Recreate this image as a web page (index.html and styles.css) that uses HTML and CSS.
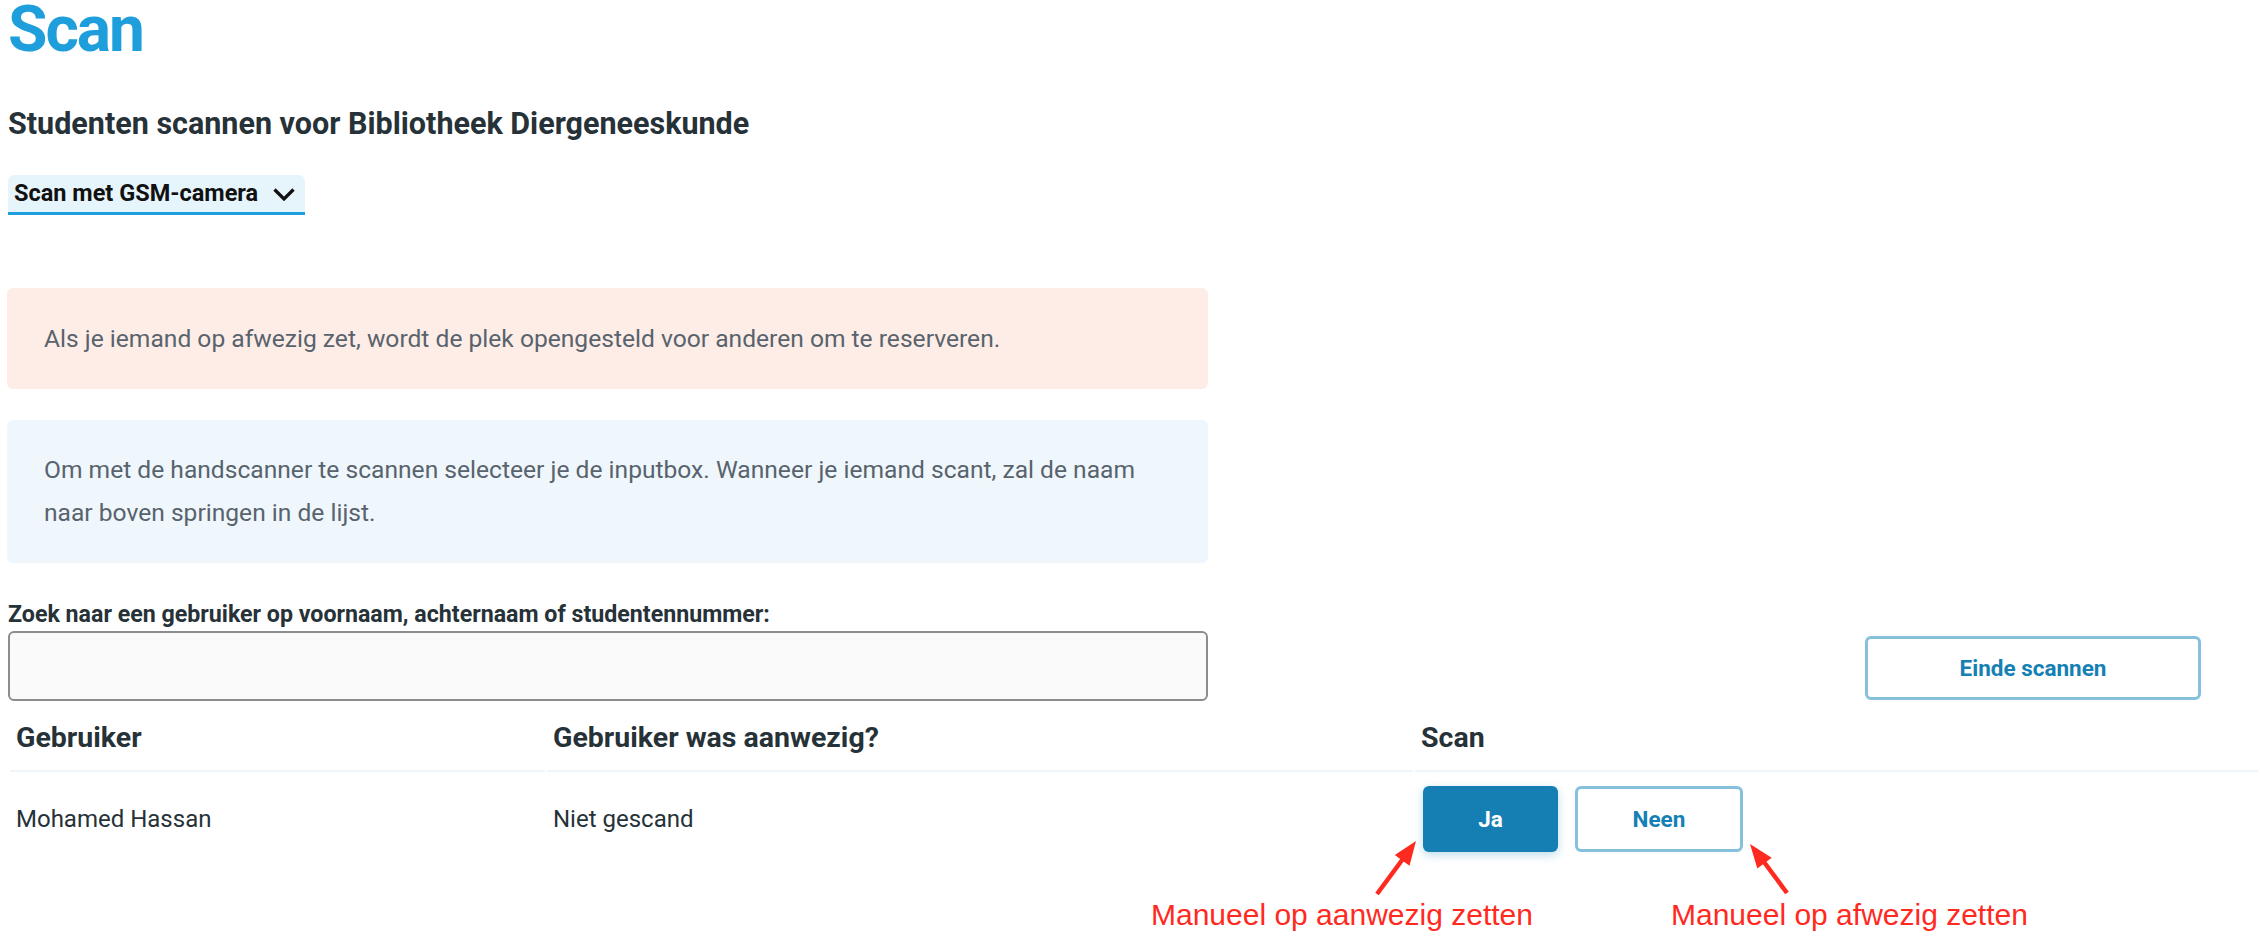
FILE: index.html
```html
<!DOCTYPE html>
<html lang="nl">
<head>
<meta charset="utf-8">
<title>Scan</title>
<link rel="stylesheet" href="styles.css">
</head>
<body>
<div class="page">
  <h1 class="title">Scan</h1>
  <h2 class="subtitle">Studenten scannen voor Bibliotheek Diergeneeskunde</h2>
  <div class="dropdown">
    <span class="dropdown-label">Scan met GSM-camera</span>
    <svg class="chevron" width="22" height="13" viewBox="0 0 22 13"><polyline points="1.5,1.5 11,11 20.5,1.5" fill="none" stroke="#111" stroke-width="3.2"/></svg>
  </div>
  <div class="alert alert-warn">Als je iemand op afwezig zet, wordt de plek opengesteld voor anderen om te reserveren.</div>
  <div class="alert alert-info">Om met de handscanner te scannen selecteer je de inputbox. Wanneer je iemand scant, zal de naam naar boven springen in de lijst.</div>
  <div class="search-row">
    <div class="search">
      <label class="search-label" for="zoek">Zoek naar een gebruiker op voornaam, achternaam of studentennummer:</label>
      <input id="zoek" class="search-input" type="text">
    </div>
    <div class="actions">
      <button class="btn btn-outline btn-end">Einde scannen</button>
    </div>
  </div>
  <table class="scan-table">
    <colgroup>
      <col class="col-user">
      <col class="col-present">
      <col class="col-scan">
    </colgroup>
    <thead>
      <tr>
        <th>Gebruiker</th>
        <th>Gebruiker was aanwezig?</th>
        <th>Scan</th>
      </tr>
    </thead>
    <tbody>
      <tr>
        <td>Mohamed Hassan</td>
        <td>Niet gescand</td>
        <td class="cell-actions">
          <div class="btn-group">
            <button class="btn btn-primary btn-ja">Ja</button>
            <button class="btn btn-outline btn-neen">Neen</button>
          </div>
        </td>
      </tr>
    </tbody>
  </table>
</div>

<div class="annotations">
  <svg class="arrows" width="700" height="80" viewBox="0 0 700 80">
    <line x1="237" y1="64" x2="262.5" y2="29.5" stroke="#ff2a1f" stroke-width="4.5"/>
    <polygon points="276,11 269.5,35.8 254.8,25" fill="#ff2a1f"/>
    <line x1="647" y1="63" x2="624" y2="32" stroke="#ff2a1f" stroke-width="4.5"/>
    <polygon points="610,14 631.7,27.8 617.3,38.6" fill="#ff2a1f"/>
  </svg>
  <div class="note note-present">Manueel op aanwezig zetten</div>
  <div class="note note-absent">Manueel op afwezig zetten</div>
</div>
</body>
</html>
```

FILE: styles.css
```css
html, body {
  margin: 0;
  padding: 0;
  background: #ffffff;
}

body {
  font-family: Roboto, "Open Sans", "Noto Sans", sans-serif;
  color: #263238;
  overflow: hidden;
}

.page {
  padding-left: 8px;
  width: 2252px;
}

.title {
  margin: 0;
  font-size: 64px;
  line-height: 60px;
  font-weight: 700;
  color: #1e9fdc;
  letter-spacing: -2px;
}

.subtitle {
  margin: 46px 0 0;
  font-size: 30.5px;
  line-height: 36px;
  font-weight: 700;
  color: #263238;
}

.dropdown {
  margin-top: 33px;
  width: 297px;
  height: 40px;
  box-sizing: border-box;
  padding: 0 10px 0 6px;
  display: flex;
  align-items: center;
  justify-content: space-between;
  background: #e6f4fc;
  border-bottom: 3px solid #1e9fdc;
  border-radius: 6px 6px 0 0;
}

.dropdown-label {
  font-size: 23.5px;
  font-weight: 700;
  color: #111111;
  line-height: 27px;
}

.chevron {
  display: block;
  margin-top: 1px;
}

.alert {
  width: 1201px;
  margin-left: -1px;
  box-sizing: border-box;
  padding: 29px 36px 29px 37px;
  border-radius: 6px;
  font-size: 24.6px;
  line-height: 43px;
  color: #58636d;
}

.alert-warn {
  margin-top: 73px;
  background: #feede7;
}

.alert-info {
  margin-top: 31px;
  background: #eff7fd;
  padding-top: 28px;
  padding-bottom: 29px;
}

.search-row {
  display: flex;
  align-items: flex-end;
  margin-top: 38px;
}

.search {
  width: 1200px;
  display: flex;
  flex-direction: column;
}

.search-label {
  font-size: 23.2px;
  line-height: 27px;
  font-weight: 700;
  color: #263238;
  margin-bottom: 3px;
}

.search-input {
  box-sizing: border-box;
  width: 1200px;
  height: 70px;
  margin: 0;
  border: 2px solid #8a8d8f;
  border-radius: 6px;
  background: #fafafa;
  font-family: inherit;
  font-size: 24px;
  padding: 0 14px;
  outline: none;
}

.actions {
  flex: 1;
  display: flex;
  justify-content: flex-end;
  padding-right: 59px;
  padding-bottom: 1px;
}

.btn {
  box-sizing: border-box;
  font-family: Roboto, "Open Sans", sans-serif;
  font-size: 22.5px;
  font-weight: 700;
  border-radius: 6px;
  cursor: pointer;
  padding: 0;
  margin: 0;
}

.btn-outline {
  background: #ffffff;
  border: 3px solid #85c0dd;
  color: #1580b4;
}

.btn-primary {
  background: #157fb3;
  border: none;
  color: #ffffff;
  box-shadow: 0 3px 10px rgba(21, 127, 179, 0.28);
}

.btn-end {
  width: 336px;
  height: 64px;
}

.scan-table {
  width: 2252px;
  table-layout: fixed;
  border-collapse: separate;
  border-spacing: 2px 0;
}

.col-user { width: 535px; }
.col-present { width: 866px; }
.col-scan { width: auto; }

.scan-table th {
  text-align: left;
  font-size: 28.5px;
  line-height: 36px;
  font-weight: 700;
  color: #263238;
  padding: 19px 6px 14px 6px;
  border-bottom: 2px solid #eef6fc;
}

.scan-table td {
  font-size: 24px;
  line-height: 36px;
  color: #263238;
  padding: 14px 6px;
  vertical-align: middle;
}

.scan-table td.cell-actions {
  padding-left: 8px;
}

.btn-group {
  display: flex;
  gap: 17px;
}

.btn-ja {
  width: 135px;
  height: 66px;
}

.btn-neen {
  width: 168px;
  height: 66px;
}

.annotations {
  position: absolute;
  left: 0;
  top: 0;
  width: 0;
  height: 0;
}

.arrows {
  position: absolute;
  left: 1140px;
  top: 830px;
}

.note {
  position: absolute;
  top: 900px;
  font-family: "Liberation Sans", Arial, sans-serif;
  font-size: 30px;
  line-height: 30px;
  color: #ff2a1f;
  white-space: nowrap;
}

.note-present {
  left: 1151px;
}

.note-absent {
  left: 1671px;
}
```
